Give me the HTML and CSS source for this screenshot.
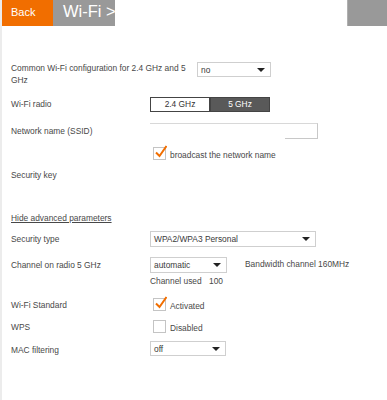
FILE: index.html
```html
<!DOCTYPE html>
<html lang="en">
<head>
  <meta charset="UTF-8" />
  <title>Wi-Fi</title>
  <link rel="stylesheet" href="styles.css">
</head>
<body>
  <div class="page">
    <div class="topbar">
      <div class="back">Back</div>
      <div class="crumb">Wi-Fi &gt;</div>
      <div class="spacer"></div>
      <div class="corner"></div>
    </div>

    <div class="content">
      <div class="row row-common">
        <div class="label label-wide">Common Wi-Fi configuration for 2.4 GHz and 5 GHz</div>
        <div class="select select-no">no<span class="arrow"></span></div>
      </div>

      <div class="row row-radio">
        <div class="label">Wi-Fi radio</div>
        <div class="toggle">
          <div class="toggle-btn">2.4 GHz</div>
          <div class="toggle-btn active">5 GHz</div>
        </div>
      </div>

      <div class="row row-ssid">
        <div class="label">Network name (SSID)</div>
        <div class="text-input"></div>
      </div>

      <div class="row row-broadcast">
        <div class="label"></div>
        <div class="check checked"></div>
        <span class="check-text">broadcast the network name</span>
      </div>

      <div class="row row-key">
        <div class="label">Security key</div>
      </div>

      <div class="advanced-link">Hide advanced parameters</div>

      <div class="row row-sec">
        <div class="label">Security type</div>
        <div class="select select-wide">WPA2/WPA3 Personal<span class="arrow"></span></div>
      </div>

      <div class="row row-channel">
        <div class="label">Channel on radio 5 GHz</div>
        <div class="select select-small">automatic<span class="arrow"></span></div>
        <div class="bandwidth">Bandwidth channel 160MHz</div>
      </div>
      <div class="row row-used">
        <div class="label"></div>
        <div class="used">Channel used <span class="used-num">100</span></div>
      </div>

      <div class="row row-std">
        <div class="label">Wi-Fi Standard</div>
        <div class="check checked"></div>
        <span class="check-text">Activated</span>
      </div>

      <div class="row row-wps">
        <div class="label">WPS</div>
        <div class="check"></div>
        <span class="check-text">Disabled</span>
      </div>

      <div class="row row-mac">
        <div class="label">MAC filtering</div>
        <div class="select select-small">off<span class="arrow"></span></div>
      </div>
    </div>
  </div>
</body>
</html>
```

FILE: styles.css
```css
body {
  margin: 0;
  font-family: "Liberation Sans", Arial, sans-serif;
  font-size: 8.4px;
  color: #484848;
  background: #fff;
}

.page {
  border-left: 2px solid #ececec;
  min-height: 400px;
}

.topbar {
  display: flex;
  height: 26px;
}

.back {
  width: 42px;
  padding-left: 9px;
  background: #f16e00;
  color: #fff;
  font-size: 11px;
  line-height: 25px;
}

.crumb {
  width: 52px;
  padding-left: 10px;
  background: #999;
  color: #fff;
  font-size: 16.5px;
  line-height: 23px;
  white-space: nowrap;
  overflow: hidden;
}

.spacer {
  flex: 1;
}

.corner {
  width: 39px;
  background: #999;
  border-left: 1px solid #b0b0b0;
}

.content {
  padding: 36px 0 0 9px;
}

.row {
  display: flex;
  align-items: center;
}

.label {
  width: 139px;
  flex-shrink: 0;
  line-height: 12px;
}

.label-wide {
  width: 180px;
  margin-right: 6px;
}

.row-common {
  align-items: flex-start;
  height: 24px;
  margin-bottom: 11px;
}

.select {
  position: relative;
  box-sizing: border-box;
  height: 15px;
  line-height: 14px;
  padding-left: 3px;
  border: 1px solid #cfcfcf;
  background: #fff;
  color: #3a3a3a;
}

.arrow {
  position: absolute;
  right: 5px;
  top: 5px;
  border-left: 4px solid transparent;
  border-right: 4px solid transparent;
  border-top: 4px solid #222;
}

.select-no {
  width: 74px;
}

.select-wide {
  width: 166px;
  height: 16px;
  line-height: 15px;
}

.select-small {
  width: 77px;
  height: 16px;
  line-height: 15px;
}

.row-radio {
  height: 14px;
  margin-bottom: 12px;
}

.toggle {
  display: flex;
}

.toggle-btn {
  box-sizing: border-box;
  width: 60px;
  height: 15px;
  line-height: 13px;
  text-align: center;
  border: 1px solid #444;
  background: #fff;
  color: #333;
}

.toggle-btn.active {
  background: #595959;
  color: #fff;
}

.row-ssid {
  height: 16px;
  margin-bottom: 8px;
}

.text-input {
  box-sizing: border-box;
  width: 168px;
  height: 16px;
  border-top: 1px solid #d8d8d8;
  border-right: 1px solid #c8c8c8;
  background: linear-gradient(to right, transparent 135px, #c8c8c8 135px) bottom / 100% 1px no-repeat;
}

.check {
  position: relative;
  box-sizing: border-box;
  width: 13px;
  height: 13px;
  margin-left: 3px;
  border: 1px solid #c4c4c4;
  background: #fff;
}

.check.checked::after {
  content: "";
  position: absolute;
  left: 1px;
  top: -3px;
  width: 12px;
  height: 13px;
  background: url("data:image/svg+xml,%3Csvg xmlns='http://www.w3.org/2000/svg' width='12' height='13' viewBox='0 0 12 13'%3E%3Cpath d='M1 7.5 L4.5 11 L11.5 1' fill='none' stroke='%23f16e00' stroke-width='2'/%3E%3C/svg%3E") no-repeat;
}

.check-text {
  margin-left: 4px;
  padding-top: 3px;
}

.row-broadcast {
  height: 13px;
  margin-bottom: 9px;
}

.row-key {
  height: 12px;
  margin-bottom: 31px;
}

.advanced-link {
  line-height: 12px;
  text-decoration: underline;
  margin-bottom: 7px;
}

.row-sec {
  height: 16px;
  margin-bottom: 10px;
}

.row-channel {
  height: 16px;
  margin-bottom: 2px;
}

.bandwidth {
  margin-left: 18px;
  margin-bottom: 2px;
}

.row-used {
  height: 12px;
  margin-bottom: 11px;
}

.used-num {
  margin-left: 5px;
}

.row-std {
  height: 13px;
  margin-bottom: 9px;
}

.row-wps {
  height: 13px;
  margin-bottom: 8px;
}

.row-mac {
  height: 15px;
}

.row-mac .label {
  padding-top: 3px;
}

.row-mac .select {
  width: 76px;
  height: 15px;
}
```
